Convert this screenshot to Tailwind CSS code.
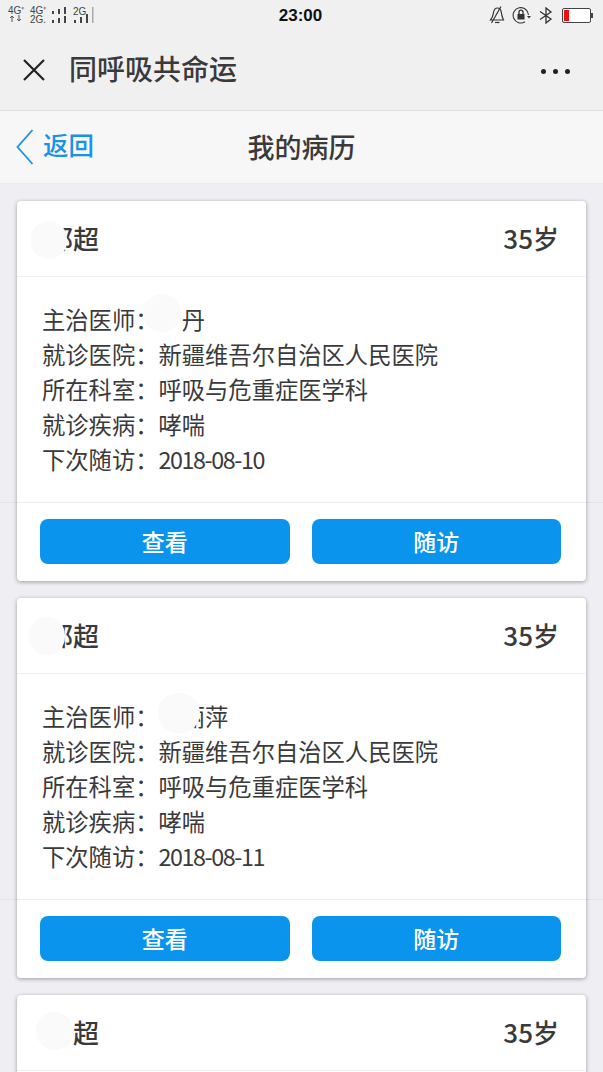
<!DOCTYPE html>
<html lang="zh-CN">
<head>
    <meta charset="UTF-8">
    <meta name="viewport" content="width=device-width, initial-scale=1.0">
    <title>我的病历</title>
    <script src="https://cdn.jsdelivr.net/npm/@tailwindcss/browser@4"></script>
</head>
<body class="h-[1072px] overflow-hidden bg-[#eeeef3] text-[#3a3a3c] font-['Noto_Sans_CJK_SC','Noto_Sans',sans-serif]">
    <!-- status bar + webview title -->
    <div class="h-[111px] bg-[#f0f0f0] border-b border-[#dedede]">
        <div class="grid h-[30px] grid-cols-[1fr_auto_1fr] items-start pl-[8px] pr-[10px] pt-[6px]">
            <div class="flex items-start text-[#444] font-['Liberation_Sans',sans-serif] text-[10px] leading-[9px]">
                <div class="w-[22px]">
                    <div>4G⁺</div>
                    <svg width="18" height="8" viewBox="0 0 18 8" fill="none" stroke="#555" stroke-width="1"><path d="M4 7 V1 M2 3 L4 1 L6 3 M11 0 V6 M9 4 L11 6 L13 4"/></svg>
                </div>
                <div class="w-[20px]">4G⁺<br>2G.</div>
                <svg width="20" height="18" viewBox="0 0 20 18" fill="#444">
                    <rect x="2" y="5" width="2" height="3"/><rect x="8" y="3" width="2" height="5"/><rect x="14" y="1" width="2" height="7"/>
                    <rect x="2" y="14" width="2" height="3"/><rect x="8" y="12" width="2" height="5"/><rect x="14" y="10" width="2" height="7"/>
                </svg>
                <div class="relative ml-[3px] h-[18px] w-[21px]">
                    <span class="absolute left-0 top-[1px]">2G</span>
                    <svg width="21" height="18" viewBox="0 0 21 18" class="absolute left-0 top-0">
                        <rect x="1" y="14" width="2" height="3" fill="#444"/><rect x="7" y="11" width="2" height="6" fill="#444"/><rect x="13" y="8" width="2" height="9" fill="#444"/><rect x="19" y="1" width="1.5" height="16" fill="#aaa"/>
                    </svg>
                </div>
            </div>
            <div class="mt-[1px] text-[17px] leading-[18px] font-bold text-[#111] font-['Liberation_Sans',sans-serif]">23:00</div>
            <div class="flex items-center justify-end gap-[7px]">
                <svg width="16" height="18" viewBox="0 0 16 18" fill="none" stroke="#333" stroke-width="1.2">
                    <path d="M1.5 14 C4 11 4 9 4.5 6.5 C5 3.5 7 2 8.5 2 C10.5 2 12 4 12.3 6.5 C12.7 9 13 11 14.5 14 Z"/><path d="M6 16.5 H10.5"/><path d="M12 0.5 L2.5 17"/>
                </svg>
                <svg width="20" height="18" viewBox="0 0 20 18" fill="none" stroke="#333" stroke-width="1.1">
                    <path d="M16.5 9 A7.7 7.7 0 1 0 13 15.8"/><path d="M15 10 L17 12.5 L19 10" fill="#333" stroke="none"/>
                    <rect x="5.5" y="8" width="7" height="5.5" fill="#333" stroke="none"/><path d="M7 8 V6.2 A2 2 0 0 1 11 6.2 V8" stroke-width="1.3"/>
                </svg>
                <svg width="14" height="17" viewBox="0 0 14 17" fill="none" stroke="#333" stroke-width="1.3">
                    <path d="M1 4.5 L12 12 L7 16 V1 L12 5 L1 12.5"/>
                </svg>
                <div class="ml-[2px] flex items-center">
                    <div class="h-[15px] w-[29px] rounded-[2px] border border-[#444] bg-white p-[1px]"><div class="h-full w-[5px] bg-[#f01010]"></div></div>
                    <div class="h-[5px] w-[2px] bg-[#444]"></div>
                </div>
            </div>
        </div>
        <div class="flex h-[80px] items-center justify-between pl-[22px] pr-[33px] pb-[1px]">
            <div class="flex items-center gap-[23px]">
                <svg width="24" height="24" viewBox="0 0 24 24" fill="none" stroke="#222" stroke-width="2.2"><path d="M2 2 L22 22 M22 2 L2 22"/></svg>
                <span class="-mt-[4px] text-[28px] leading-[36px] font-medium">同呼吸共命运</span>
            </div>
            <div class="mt-[3px] flex gap-[7px]">
                <span class="size-[5px] rounded-full bg-[#222]"></span><span class="size-[5px] rounded-full bg-[#222]"></span><span class="size-[5px] rounded-full bg-[#222]"></span>
            </div>
        </div>
    </div>

    <!-- page header -->
    <div class="grid h-[73px] grid-cols-[1fr_auto_1fr] items-center border-b border-[#ececec] bg-[#f7f7f7] pl-[16px]">
        <div class="flex items-center gap-[9px] text-[#1a93e6]">
            <svg width="18" height="36" viewBox="0 0 18 36" fill="none" stroke="#1a93e6" stroke-width="1.8"><path d="M16.5 1 L1.5 18 L16.5 35"/></svg>
            <span class="-mt-[7px] text-[25.5px] leading-[32px] font-medium">返回</span>
        </div>
        <span class="-mt-[1px] -translate-x-[8px] text-[27px] leading-[36px] font-medium">我的病历</span>
    </div>

    <div class="relative flex h-[888px] flex-col gap-[17px] overflow-hidden px-[17px] pt-[17px]">
        <!-- faint full width lines behind the cards -->
        <div class="absolute left-0 right-0 top-[318px] h-px bg-[#e4e4e8]"></div>
        <div class="absolute left-0 right-0 top-[715px] h-px bg-[#e4e4e8]"></div>

        <div class="relative h-[380px] shrink-0 rounded-[4px] bg-white shadow-[0_1px_4px_rgba(0,0,0,0.35)]">
            <div class="flex h-[76px] items-center justify-between border-b border-[#f0f0f0] pl-[30px] pr-[27px]">
                <span class="-mt-[2px] text-[26px] leading-[36px] font-medium">郭超</span>
                <span class="-mt-[2px] text-[26px] leading-[36px] font-medium">35岁</span>
            </div>
            <div class="h-[226px] border-b border-[#ececec] pl-[25px] pt-[25px] text-[23.3px] leading-[35px]">
                <p>主治医师：<span class="invisible">丽</span>丹</p>
                <p>就诊医院：新疆维吾尔自治区人民医院</p>
                <p>所在科室：呼吸与危重症医学科</p>
                <p>就诊疾病：哮喘</p>
                <p>下次随访：<span class="tracking-[-1.4px]">2018-08-10</span></p>
            </div>
            <div class="flex gap-[22px] pl-[23px] pr-[25px] pt-[16px]">
                <button type="button" class="h-[45px] flex-1 rounded-[8px] bg-[#0a94ee] text-[23px] font-medium text-white">查看</button>
                <button type="button" class="h-[45px] flex-1 rounded-[8px] bg-[#0a94ee] text-[23px] font-medium text-white">随访</button>
            </div>
            <div class="absolute left-[14px] top-[20px] h-[38px] w-[36px] rounded-full bg-[#fafafa]"></div>
            <div class="absolute left-[126px] top-[93px] h-[38px] w-[38px] rounded-full bg-[#fafafa]"></div>
        </div>

        <div class="relative h-[380px] shrink-0 rounded-[4px] bg-white shadow-[0_1px_4px_rgba(0,0,0,0.35)]">
            <div class="flex h-[76px] items-center justify-between border-b border-[#f0f0f0] pl-[30px] pr-[27px]">
                <span class="-mt-[2px] text-[26px] leading-[36px] font-medium">郭超</span>
                <span class="-mt-[2px] text-[26px] leading-[36px] font-medium">35岁</span>
            </div>
            <div class="h-[226px] border-b border-[#ececec] pl-[25px] pt-[25px] text-[23.3px] leading-[35px]">
                <p>主治医师：<span class="invisible">刘</span>丽萍</p>
                <p>就诊医院：新疆维吾尔自治区人民医院</p>
                <p>所在科室：呼吸与危重症医学科</p>
                <p>就诊疾病：哮喘</p>
                <p>下次随访：<span class="tracking-[-1.4px]">2018-08-11</span></p>
            </div>
            <div class="flex gap-[22px] pl-[23px] pr-[25px] pt-[16px]">
                <button type="button" class="h-[45px] flex-1 rounded-[8px] bg-[#0a94ee] text-[23px] font-medium text-white">查看</button>
                <button type="button" class="h-[45px] flex-1 rounded-[8px] bg-[#0a94ee] text-[23px] font-medium text-white">随访</button>
            </div>
            <div class="absolute left-[12px] top-[19px] h-[38px] w-[36px] rounded-full bg-[#fafafa]"></div>
            <div class="absolute left-[141px] top-[95px] h-[40px] w-[42px] rounded-full bg-[#fafafa]"></div>
        </div>

        <div class="relative h-[380px] shrink-0 rounded-[4px] bg-white shadow-[0_1px_4px_rgba(0,0,0,0.35)]">
            <div class="flex h-[76px] items-center justify-between border-b border-[#f0f0f0] pl-[30px] pr-[27px]">
                <span class="-mt-[2px] text-[26px] leading-[36px] font-medium"><span class="invisible">郭</span>超</span>
                <span class="-mt-[2px] text-[26px] leading-[36px] font-medium">35岁</span>
            </div>
            <div class="absolute left-[19px] top-[17px] h-[38px] w-[37px] rounded-full bg-[#fafafa]"></div>
        </div>
    </div>
</body>
</html>
